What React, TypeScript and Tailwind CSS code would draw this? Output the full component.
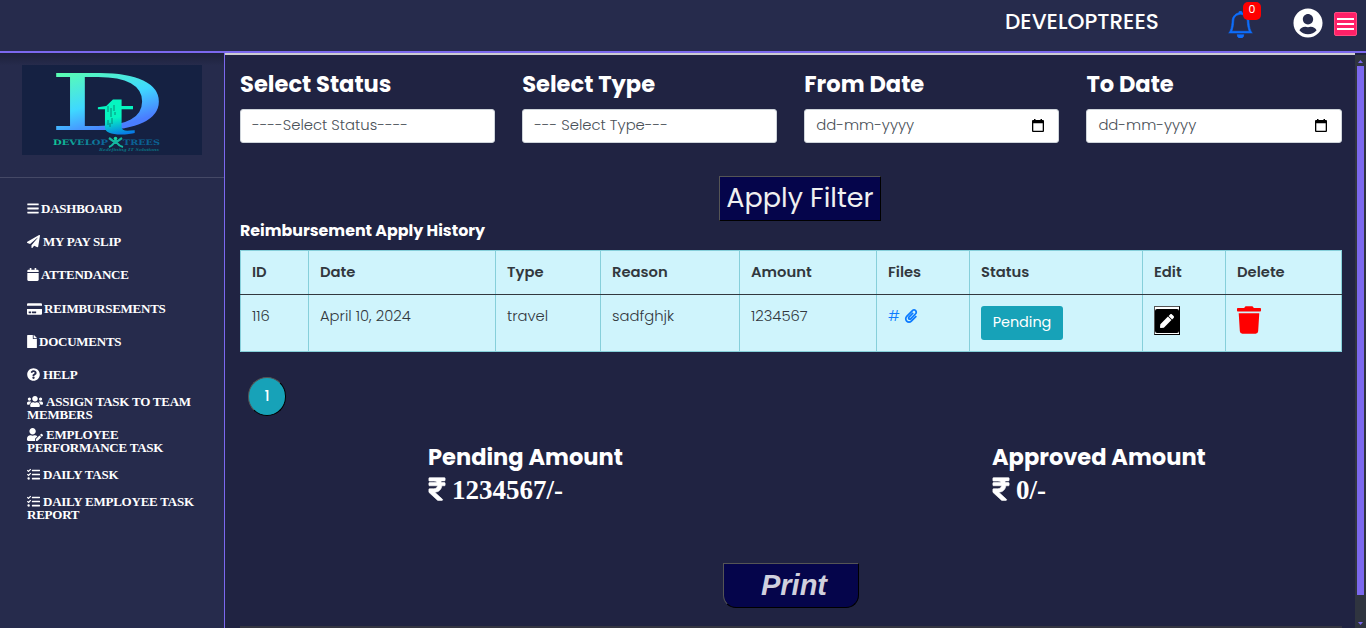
import type { ReactNode } from "react";
import {
  FaBars,
  FaCalendar,
  FaCreditCard,
  FaFile,
  FaPaperclip,
  FaPaperPlane,
  FaPen,
  FaQuestionCircle,
  FaRupeeSign,
  FaTasks,
  FaTrash,
  FaUserCircle,
  FaUserEdit,
  FaUsers,
} from "react-icons/fa";
import { BsBell } from "react-icons/bs";

const menu: { label: string; icon: ReactNode; box: string }[] = [
  { label: "DASHBOARD", icon: <FaBars className="mr-[2px] inline h-[13px] w-[12px] align-[-2px]" />, box: "h-[33px]" },
  { label: "MY PAY SLIP", icon: <FaPaperPlane className="mr-[3px] inline size-[13px] align-[-2px]" />, box: "h-[33px]" },
  { label: "ATTENDANCE", icon: <FaCalendar className="mr-[2px] inline h-[13px] w-[12px] align-[-2px]" />, box: "h-[34px]" },
  { label: "REIMBURSEMENTS", icon: <FaCreditCard className="mr-[2px] inline h-[14px] w-[15px] align-[-3px]" />, box: "h-[33px]" },
  { label: "DOCUMENTS", icon: <FaFile className="mr-[2px] inline h-[13px] w-[10px] align-[-2px]" />, box: "h-[33px]" },
  { label: "HELP", icon: <FaQuestionCircle className="mr-[3px] inline size-[13px] align-[-2px]" />, box: "h-[27px]" },
  { label: "ASSIGN TASK TO TEAM MEMBERS", icon: <FaUsers className="mr-[3px] inline h-[13px] w-[16px] align-[-2px]" />, box: "h-[33px]" },
  { label: "EMPLOYEE PERFORMANCE TASK", icon: <FaUserEdit className="mr-[3px] inline h-[13px] w-[16px] align-[-2px]" />, box: "h-[40px]" },
  { label: "DAILY TASK", icon: <FaTasks className="mr-[3px] inline size-[13px] align-[-2px]" />, box: "h-[27px]" },
  { label: "DAILY EMPLOYEE TASK REPORT", icon: <FaTasks className="mr-[3px] inline size-[13px] align-[-2px]" />, box: "h-[40px]" },
];

function Logo() {
  return (
    <svg width="180" height="90" viewBox="0 0 180 90" className="block bg-[#152142]">
      <defs>
        <linearGradient id="d" gradientUnits="userSpaceOnUse" x1="5" y1="-57" x2="42" y2="6">
          <stop offset="0" stopColor="#5affb0" />
          <stop offset="0.5" stopColor="#3fd8ff" />
          <stop offset="0.85" stopColor="#4a7dff" />
        </linearGradient>
        <linearGradient id="t" gradientUnits="userSpaceOnUse" x1="6" y1="-20" x2="14" y2="2">
          <stop offset="0.2" stopColor="#06f5c0" />
          <stop offset="0.95" stopColor="#0878e8" />
        </linearGradient>
        <linearGradient id="w" x1="0" y1="0" x2="1" y2="0">
          <stop offset="0" stopColor="#10c996" />
          <stop offset="1" stopColor="#0c5e9c" />
        </linearGradient>
      </defs>
      <text transform="translate(26 65) scale(1.91 1)" fontFamily="DejaVu Serif" fontSize="78" fill="url(#d)">D</text>
      <text transform="translate(74 69) scale(1.9 1)" fontFamily="Liberation Serif" fontWeight="700" fontSize="62" fill="url(#t)">t</text>
      <path d="M86 41v6m3-4v9m3-12v6m-2 7v6m-4-4v5m7-13v3m-5 8v4" stroke="#08806f" strokeWidth="0.9" fill="none" />
      <text x="31" y="80" fontFamily="DejaVu Serif" fontWeight="700" fontSize="7.500" textLength="55" lengthAdjust="spacingAndGlyphs" fill="url(#w)">DEVELOP</text>
      <text x="101" y="80" fontFamily="DejaVu Serif" fontWeight="700" fontSize="7.500" textLength="37" lengthAdjust="spacingAndGlyphs" fill="#0b6193">TREES</text>
      <circle cx="93.500" cy="73.500" r="1.800" fill="#15d5a0" />
      <path d="M87 73l4 3h5l4-3M93.500 75v4M87 82q3-1 5-4h3q2 3 6 4" stroke="#14b7a0" strokeWidth="2.200" fill="none" />
      <text x="77" y="86" fontFamily="Liberation Serif" fontWeight="700" fontStyle="italic" fontSize="4.500" textLength="60" lengthAdjust="spacingAndGlyphs" fill="#0b7080">Redefining IT Solutions</text>
    </svg>
  );
}

function CalendarGlyph() {
  return (
    <svg width="12" height="13" viewBox="0 0 12 13" fill="#000">
      <path d="M2 0h1.500v1H8.500V0H10v1h1q1 0 1 1v10q0 1-1 1H1q-1 0-1-1V2q0-1 1-1h1zM1.300 4.300v7.400h9.400V4.300z" fillRule="evenodd" />
    </svg>
  );
}

function Field({ label, value, date }: { label: string; value: string; date?: boolean }) {
  return (
    <div className="flex flex-col">
      <div className="h-[39px] text-[22.600px] leading-[29px] font-bold whitespace-nowrap text-white">{label}</div>
      <div className="flex h-[34px] items-center justify-between rounded-[3px] border border-[#ced4da] bg-white pr-[14px] pb-px pl-[11px] text-[14.800px] font-light text-[#495057]">
        <span className="whitespace-nowrap">{value}</span>
        {date && <CalendarGlyph />}
      </div>
    </div>
  );
}

function Amount({ title, value }: { title: string; value: string }) {
  return (
    <div className="w-[564px] shrink-0">
      <div className="text-[22.550px] leading-[30px] font-bold">{title}</div>
      <div className="flex h-[36px] items-center gap-[6px] font-['Liberation_Serif',serif] text-[27px] font-bold">
        <FaRupeeSign className="-mt-[2px] h-[26px] w-[18px] overflow-visible stroke-white [stroke-width:12]" />
        {value}
      </div>
    </div>
  );
}

const heads = ["ID", "Date", "Type", "Reason", "Amount", "Files", "Status", "Edit", "Delete"];

export default function App() {
  const cell = "border border-[#86cfda] px-[11px] py-0 align-top";
  return (
    <div className="flex h-[628px] w-[1366px] flex-col overflow-hidden bg-[#202342] font-['Poppins','Inter',sans-serif]">
      <header className="flex h-[53px] shrink-0 items-start border-b-2 border-[#7b68ee] bg-[#262b4c] pl-[1005px] text-white">
        <div className="mt-[6px] w-[223px] text-[21.600px] leading-[32px] font-medium whitespace-nowrap">DEVELOPTREES</div>
        <div className="relative mt-[11px] w-[65px]">
          <BsBell className="size-[27px] -translate-x-px stroke-[#0d6efd] text-[#0d6efd] [stroke-width:0.35]" />
          <span className="absolute top-[-9px] left-[15px] flex h-[18px] w-[18px] items-center justify-center rounded-[5px] bg-[#ff0000] pb-[3px] text-[11px]">0</span>
        </div>
        <FaUserCircle className="mt-[8px] size-[30px]" />
        <div className="mt-[12px] ml-[11px] flex h-[24px] w-[23px] flex-col justify-center gap-[3px] rounded-[2px] border border-[#ff4d80] bg-[#ff2068] px-[2px]">
          <i className="h-[2px] bg-white" />
          <i className="h-[2px] bg-white" />
          <i className="h-[2px] bg-white" />
        </div>
      </header>
      <div className="flex min-h-0 flex-1">
        <aside className="flex w-[225px] shrink-0 flex-col border-r border-[#7b68ee] bg-[#262b4c]">
          <div className="h-[125px] shrink-0 border-b border-[#454966] bg-linear-to-b from-[#1d213b] to-[#262b4c] to-10% pt-[12px] pl-[22px]">
            <Logo />
          </div>
          <nav className="mt-[24px] pl-[27px] font-['Liberation_Serif',serif] text-[13px] leading-[12.800px] font-bold tracking-[-0.240px] text-white">
            {menu.map((m) => (
              <div key={m.label} className={`w-[172px] ${m.box}`}>
                {m.icon}
                {m.label}
              </div>
            ))}
          </nav>
        </aside>
        <main className="flex min-w-0 flex-1 flex-col border-t-2 border-[#cdcdd2] pl-[15px]">
          <div className="mt-[15px] grid w-[1101.500px] grid-cols-4 gap-[27px]">
            <Field label="Select Status" value="----Select Status----" />
            <Field label="Select Type" value="--- Select Type---" />
            <Field label="From Date" value="dd-mm-yyyy" date />
            <Field label="To Date" value="dd-mm-yyyy" date />
          </div>
          <button className="mt-[33px] ml-[479px] h-[45px] w-[162px] border border-t-[#555] border-r-black border-b-black border-l-[#555] bg-[#05054b] pb-[2px] text-[27px] leading-[40px] whitespace-nowrap text-[#f0f0f0]">
            Apply Filter
          </button>
          <h2 className="h-[29px] text-[15.850px] leading-[19px] font-bold text-white">Reimbursement Apply History</h2>
          <table className="w-[1102px] table-fixed border-collapse bg-[#cff4fc] text-left text-[14.750px] text-[#32383e]">
            <colgroup>
              <col className="w-[68px]" />
              <col className="w-[187px]" />
              <col className="w-[105px]" />
              <col className="w-[139px]" />
              <col className="w-[137px]" />
              <col className="w-[93px]" />
              <col className="w-[173px]" />
              <col className="w-[83px]" />
              <col className="w-[116px]" />
            </colgroup>
            <thead>
              <tr className="h-[44px]">
                {heads.map((h) => (
                  <th key={h} className="border border-[#86cfda] border-b-[#32383e] px-[11px] py-0 font-semibold">{h}</th>
                ))}
              </tr>
            </thead>
            <tbody>
              <tr className="h-[57px] leading-[22px] font-light">
                <td className={cell}><div className="pt-[10px]">116</div></td>
                <td className={cell}><div className="pt-[10px]">April 10, 2024</div></td>
                <td className={cell}><div className="pt-[10px]">travel</div></td>
                <td className={cell}><div className="pt-[10px]">sadfghjk</div></td>
                <td className={cell}><div className="pt-[10px]">1234567</div></td>
                <td className={cell}>
                  <div className="flex items-center gap-[4px] pt-[10px] text-[#0d7bff]"># <FaPaperclip className="size-[14px]" /></div>
                </td>
                <td className={cell}>
                  <div className="mt-[11px] flex h-[34px] w-[82px] items-center justify-center rounded-[3px] bg-[#17a2b8] pb-[2px] text-[14.400px] font-normal text-white">Pending</div>
                </td>
                <td className={cell}>
                  <div className="mt-[11px] flex h-[29px] w-[26px] items-center justify-center border border-t-[#555] border-r-black border-b-black border-l-[#555] bg-white">
                    <span className="flex h-[24px] w-[24px] items-center justify-center rounded-[2px] bg-black text-white"><FaPen className="size-[14px]" /></span>
                  </div>
                </td>
                <td className={cell}><FaTrash className="mt-[11px] h-[28px] w-[24px] text-[#ff0000]" /></td>
              </tr>
            </tbody>
          </table>
          <div className="mt-[25px] ml-[8px] flex h-[39px] w-[38px] items-center justify-center rounded-[19px] border border-t-[#555] border-r-black border-b-black border-l-[#555] bg-[#17a2b8] text-[14.500px] font-medium text-white">1</div>
          <div className="mt-[26px] flex pl-[188px] text-white">
            <Amount title="Pending Amount" value="1234567/-" />
            <Amount title="Approved Amount" value="0/-" />
          </div>
          <button className="mt-[55px] ml-[483px] h-[45px] w-[136px] shrink-0 rounded-b-[13px] border border-t-[#555] border-r-black border-b-black border-l-[#555] bg-[#05054b] pb-[2px] pl-[6px] font-['Liberation_Sans',sans-serif] text-[29px] leading-[42px] font-bold text-[#d0d0dd] italic">
            Print
          </button>
          <div className="mt-[18px] h-[2px] w-[1102px] shrink-0 bg-[#343541]" />
        </main>
        <div className="z-10 mt-[2px] flex w-[11px] shrink-0 flex-col items-center bg-[#2f343f]">
          <svg width="11" height="11" className="shrink-0"><path d="M3 8h5L5.500 5z" fill="#7b68ee" /></svg>
          <div className="h-[529px] w-[7px] shrink-0 bg-[#7b68ee]" />
          <svg width="11" height="17" className="mt-auto shrink-0"><path d="M3 11h5l-2.500 3z" fill="#7b68ee" /></svg>
        </div>
      </div>
    </div>
  );
}
